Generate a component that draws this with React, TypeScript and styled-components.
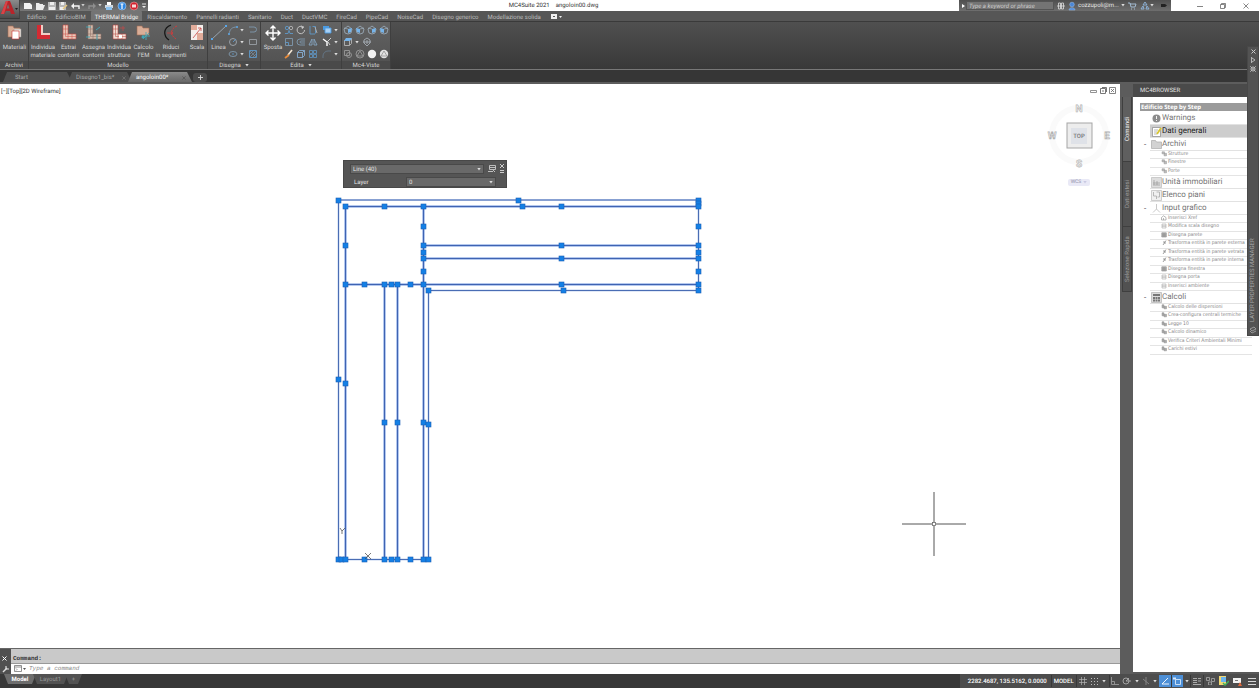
import React from 'react';
import styled, { createGlobalStyle } from 'styled-components';

const Global = createGlobalStyle`
  * { box-sizing: border-box; }
  html, body { margin: 0; padding: 0; }
  body {
    font-family: Roboto, "Liberation Sans", sans-serif;
    font-size: 6px;
    line-height: 8px;
    text-rendering: geometricPrecision;
    background: #fff;
    overflow: hidden;
  }
  button, input, select {
    font: inherit;
    color: inherit;
    margin: 0;
    padding: 0;
    border: 0;
    background: none;
    text-rendering: inherit;
  }
  ul { list-style: none; margin: 0; padding: 0; }
  svg { display: block; flex: none; }
`;

/* ---------- shell ---------- */

const Shell = styled.div`
  position: relative;
  display: flex;
  flex-direction: column;
  min-height: 100vh;
  background: #595959;
`;

const TitleBar = styled.header`
  display: flex;
  height: 11px;
  padding-left: 18px;
  background: #fff;
`;

const AppButton = styled.button`
  position: absolute;
  left: 0;
  top: 0;
  z-index: 2;
  width: 20px;
  height: 19px;
  background: linear-gradient(#8b8b8b, #4c4c4c);
  border-right: 1px solid #444;
  border-bottom: 1px solid #3a3a3a;
`;

const QuickAccess = styled.div`
  display: flex;
  align-items: center;
  width: 130px;
  padding-left: 4px;
  background: linear-gradient(#4f4f4f, #777);
`;

const QuickButton = styled.button<{ $w?: number }>`
  display: flex;
  align-items: center;
  justify-content: center;
  width: ${p => p.$w ?? 12}px;
  height: 11px;
`;

const WindowTitle = styled.h1`
  flex: 1;
  display: flex;
  justify-content: center;
  gap: 6px;
  margin: 0;
  font-size: 6px;
  font-weight: 400;
  line-height: 12px;
  color: #333;
`;

const InfoBar = styled.div`
  display: flex;
  align-items: center;
  width: 212px;
  color: #e4e4e4;
  background: linear-gradient(#4f4f4f, #6e6e6e);
`;

const SearchInput = styled.input`
  width: 88px;
  height: 9px;
  padding: 1px 2px 0;
  font-style: italic;
  color: #ddd;
  background: #747474;
  border: 1px solid #555;
  &::placeholder { color: #ccc; opacity: 1; }
`;

const AccountButton = styled.button`
  display: flex;
  align-items: center;
  gap: 2px;
  width: 58px;
  line-height: 12px;
`;

const WindowControls = styled.div`
  display: flex;
  width: 88px;
  padding-left: 18px;
`;

/* ---------- ribbon ---------- */

const TabRow = styled.nav`
  display: flex;
  gap: 1px;
  height: 11px;
  padding-left: 23px;
  background: #565656;
  border-bottom: 1px solid #3a3a3a;
`;

const RibbonTab = styled.button<{ $active?: boolean }>`
  height: 10px;
  padding: 1px 4px 0;
  line-height: 11px;
  color: ${p => (p.$active ? '#f4f4f4' : '#bebebe')};
  background: ${p => (p.$active ? '#747474' : 'transparent')};
  border-radius: 1px 1px 0 0;
`;

const RibbonMenu = styled.button`
  display: flex;
  align-items: center;
  margin-left: 5px;
`;

const Ribbon = styled.div`
  display: flex;
  height: 48px;
  background: linear-gradient(#505050, #383838);
  border-bottom: 1px solid #777;
`;

const Panel = styled.section<{ $w: number }>`
  display: flex;
  flex-direction: column;
  width: ${p => p.$w}px;
  background: linear-gradient(#636363, #505050);
  border-right: 1px solid #3f3f3f;
  color: #d6d6d6;
`;

const PanelBody = styled.div`
  flex: 1;
  display: flex;
  padding: 2px 0 0 1px;
`;

const PanelTitle = styled.h2`
  display: flex;
  align-items: center;
  justify-content: center;
  gap: 4px;
  height: 8px;
  margin: 0;
  padding-top: 1px;
  font-size: 6px;
  font-weight: 400;
  line-height: 8px;
  background: #4a4a4a;
`;

const ToolButton = styled.button<{ $w: number }>`
  display: flex;
  flex-direction: column;
  align-items: center;
  gap: 3px;
  width: ${p => p.$w}px;
  line-height: 8px;
  white-space: nowrap;
`;

const ToolLabel = styled.span`
  display: flex;
  flex-direction: column;
  align-items: center;
`;

const SmallGrid = styled.div`
  display: flex;
  flex-direction: column;
  flex: 1;
`;

const SmallRow = styled.div`
  display: flex;
  height: 12px;
`;

const SmallTool = styled.button<{ $w?: number }>`
  display: flex;
  align-items: center;
  gap: 2px;
  width: ${p => p.$w ?? 12}px;
  height: 12px;
`;

/* ---------- document tabs ---------- */

const DocTabs = styled.nav`
  display: flex;
  align-items: flex-end;
  height: 14px;
  padding-left: 3px;
  background: #363636;
  border-bottom: 2px solid #5d5d5d;
`;

const DocTab = styled.button<{ $w: number; $active?: boolean; $inset?: number }>`
  display: flex;
  align-items: center;
  justify-content: space-between;
  width: ${p => p.$w}px;
  height: 10px;
  margin-right: -4px;
  padding: 1px 6px 0 ${p => p.$inset ?? 8}px;
  line-height: 10px;
  color: ${p => (p.$active ? '#fff' : '#a8a8a8')};
  background: ${p => (p.$active ? 'linear-gradient(#8a8a8a, #686868)' : '#505050')};
  clip-path: polygon(4px 0, calc(100% - 5px) 0, 100% 100%, 0 100%);
`;

const NewTab = styled.button`
  display: flex;
  align-items: center;
  justify-content: center;
  width: 14px;
  height: 9px;
  margin-left: 5px;
  background: #4c4c4c;
  border-radius: 3px;
`;

/* ---------- work area ---------- */

const Main = styled.main`
  flex: 1;
  display: flex;
`;

const WorkColumn = styled.div`
  flex: 1;
  display: flex;
  flex-direction: column;
  min-width: 0;
`;

const Viewport = styled.section`
  position: relative;
  flex: 1;
  background: #fff;
  overflow: hidden;
`;

const ViewLabel = styled.div`
  position: absolute;
  left: 1px;
  top: 3px;
  line-height: 9px;
  color: #333;
`;

const Canvas = styled.svg`
  position: absolute;
  inset: 0;
  width: 100%;
  height: 100%;
`;

const ViewButtons = styled.div`
  position: absolute;
  right: 3px;
  top: 1px;
  display: flex;
`;

const ViewCube = styled.div`
  position: absolute;
  right: 7px;
  top: 17px;
`;

const WcsHolder = styled.div`
  position: absolute;
  right: 30px;
  top: 95px;
`;

const WcsButton = styled.button`
  display: flex;
  align-items: center;
  justify-content: center;
  gap: 2px;
  width: 22px;
  height: 7px;
  font-size: 5px;
  line-height: 7px;
  color: #8d8da6;
  background: #e9e9f6;
  border-radius: 2px;
`;

const QuickProps = styled.form`
  position: absolute;
  left: 343px;
  top: 76px;
  display: flex;
  width: 164px;
  height: 28px;
  padding: 3px 2px 2px;
  gap: 4px;
  color: #e6e6e6;
  background: #555;
  border: 1px solid #484848;
`;

const Handle = styled.span`
  width: 4px;
  margin: 0 0 8px 0;
  background: repeating-linear-gradient(#2e2e2e 0 1px, #6a6a6a 1px 2px);
`;

const PropRows = styled.div`
  display: flex;
  flex-direction: column;
  gap: 3px;
  width: 146px;
`;

const PropRow = styled.label`
  display: flex;
  align-items: center;
  height: 10px;
`;

const PropName = styled.span`
  width: 56px;
  padding: 1px 0 0 4px;
`;

const SelectBox = styled.span<{ $w: number }>`
  position: relative;
  display: flex;
  align-items: center;
  justify-content: flex-end;
  width: ${p => p.$w}px;
  height: 10px;
  padding-right: 2px;
  background: #696969;
  border: 1px solid #494949;
`;

const Select = styled.select`
  position: absolute;
  inset: 0;
  width: 100%;
  padding: 1px 0 0 2px;
  line-height: 7px;
  appearance: none;
  color: #e6e6e6;
`;

const PropIcons = styled.div`
  display: flex;
  flex: 1;
  justify-content: flex-end;
`;

const CommandArea = styled.section`
  display: flex;
  height: 26px;
  background: #c9c9c9;
  border-top: 1px solid #666;
  font-family: "Liberation Mono", monospace;
`;

const CommandGrip = styled.div`
  display: flex;
  flex-direction: column;
  justify-content: flex-end;
  gap: 4px;
  width: 11px;
  padding: 0 0 1px 2px;
  background: #505050;
`;

const CommandLines = styled.div`
  flex: 1;
  display: flex;
  flex-direction: column;
`;

const History = styled.output`
  height: 15px;
  padding: 6px 2px 0;
  font-weight: 700;
  line-height: 8px;
  color: #333;
  border-bottom: 1px solid #999;
`;

const Prompt = styled.label`
  display: flex;
  align-items: center;
  gap: 3px;
  flex: 1;
  padding: 0 0 1px 3px;
  background: #fff;
`;

const CommandInput = styled.input`
  flex: 1;
  height: 9px;
  font-style: italic;
  &::placeholder { color: #888; opacity: 1; }
`;

/* ---------- side browser ---------- */

const SideTabs = styled.nav`
  display: flex;
  flex-direction: column;
  width: 13px;
  padding: 13px 1px 0 2px;
  background: #5c5c5c;
`;

const SideTab = styled.button<{ $active?: boolean }>`
  display: flex;
  align-items: center;
  justify-content: center;
  height: 65px;
  writing-mode: vertical-rl;
  transform: rotate(180deg);
  color: ${p => (p.$active ? '#f2f2f2' : '#9d9d9d')};
  background: ${p => (p.$active ? '#5f5f5f' : '#515151')};
  border: 1px solid #3f3f3f;
  border-bottom-width: 0;
  line-height: 9px;
`;

const Browser = styled.aside`
  width: 126px;
  margin-bottom: 2px;
  background: #fff;
`;

const BrowserTitle = styled.h2`
  height: 13px;
  margin: 0;
  padding-left: 7px;
  font-size: 6px;
  font-weight: 400;
  line-height: 14px;
  color: #e0e0e0;
  background: #4a4a4a;
`;

const Tree = styled.div`
  display: flex;
  flex-direction: column;
  padding: 6px 7px 0 7px;
`;

const TreeHeader = styled.h3`
  height: 8px;
  margin: 0 0 1px;
  padding-left: 1px;
  font-family: "Noto Sans", sans-serif;
  font-size: 6px;
  font-weight: 700;
  line-height: 8px;
  color: #fff;
  background: #9b9b9b;
`;

const Row = styled.div<{ $selected?: boolean }>`
  display: flex;
  align-items: center;
  height: 13px;
  font-size: 8px;
  line-height: 12px;
  color: ${p => (p.$selected ? '#222' : '#757575')};
`;

const Toggle = styled.button`
  width: 10px;
  height: 12px;
  color: #555;
  font-size: 8px;
  line-height: 10px;
`;

const RowButton = styled.button<{ $selected?: boolean }>`
  flex: 1;
  display: flex;
  align-items: center;
  height: 13px;
  padding-left: 1px;
  background: ${p => (p.$selected ? '#cdcdcd' : 'transparent')};
  border-bottom: 1px solid #e2e2e2;
  white-space: nowrap;
`;

const SubList = styled.ul`
  padding-left: 10px;
`;

const SubItem = styled.li`
  display: flex;
  align-items: flex-start;
  height: 8px;
  border-bottom: 1px solid #e4e4e4;
  &:nth-child(even) { height: 9px; }
`;

const SubButton = styled.button`
  display: flex;
  align-items: flex-start;
  gap: 1px;
  height: 7px;
  padding-left: 11px;
  font-family: "DejaVu Sans Condensed", "Liberation Sans", sans-serif;
  font-size: 5px;
  line-height: 7px;
  color: #858585;
  white-space: nowrap;
`;

const LayerManager = styled.aside`
  position: absolute;
  right: 0;
  top: 46px;
  z-index: 3;
  display: flex;
  flex-direction: column;
  align-items: center;
  gap: 3px;
  width: 12px;
  height: 290px;
  padding: 2px 0 1px;
  color: #a8a8a8;
  background: #535353;
  border: 1px solid #484848;
`;

const LayerTitle = styled.span`
  flex: 1;
  padding-top: 1px;
  writing-mode: vertical-rl;
  transform: rotate(180deg);
  line-height: 10px;
  white-space: nowrap;
`;

/* ---------- status bar ---------- */

const StatusBar = styled.footer`
  display: flex;
  justify-content: space-between;
  height: 14px;
  background: #383838;
`;

const LayoutTabs = styled.nav`
  display: flex;
  height: 10px;
  padding-left: 4px;
`;

const LayoutTab = styled.button<{ $active?: boolean; $w: number }>`
  width: ${p => p.$w}px;
  height: 10px;
  margin-right: -3px;
  padding-top: 1px;
  line-height: 10px;
  font-weight: ${p => (p.$active ? 700 : 400)};
  color: ${p => (p.$active ? '#fff' : '#999')};
  background: ${p => (p.$active ? '#6d6d6d' : '#525252')};
  clip-path: polygon(0 0, 100% 0, calc(100% - 4px) 100%, 4px 100%);
`;

const StatusTools = styled.div`
  display: flex;
  align-items: center;
  width: 299px;
  color: #fff;
  background: #4d4d4d;
`;

const Coordinates = styled.output`
  width: 91px;
  padding: 2px 4px 0 0;
  text-align: right;
  line-height: 12px;
  font-weight: 500;
  white-space: nowrap;
`;

const StatusButton = styled.button<{ $w?: number; $on?: boolean; $line?: boolean; $text?: boolean }>`
  display: flex;
  align-items: center;
  justify-content: center;
  width: ${p => p.$w ?? 13}px;
  height: 12px;
  padding-top: ${p => (p.$text ? 2 : 0)}px;
  font-weight: 500;
  background: ${p => (p.$on ? '#4d8fd6' : 'transparent')};
  border-left: ${p => (p.$line ? '1px solid #383838' : '0')};
`;

/* ---------- drawings ---------- */

type IconProps = { w?: number; h?: number; children: React.ReactNode; stroke?: string };

const Icon = ({ w = 10, h = 10, stroke = '#b4b4b4', children }: IconProps) => (
  <svg width={w} height={h} viewBox={`0 0 ${w} ${h}`} fill="none" stroke={stroke} strokeWidth={0.9} aria-hidden="true">
    {children}
  </svg>
);

const Caret = ({ color = '#ddd' }: { color?: string }) => (
  <svg width="4" height="3" viewBox="0 0 4 3" aria-hidden="true"><path d="M.3 0h3.400L2 2.600z" fill={color} /></svg>
);

const Cross = ({ color = '#ddd', size = 5 }: { color?: string; size?: number }) => (
  <svg width={size} height={size} viewBox="0 0 5 5" stroke={color} fill="none" aria-hidden="true"><path d="M.5.5l4 4M4.5.5l-4 4" /></svg>
);

const LShape = ({ fill, lines }: { fill: string; lines: string }) => (
  <>
    <path d="M3 1h5v9h8v5H3z" fill={fill} stroke={lines} strokeWidth=".6" />
    <path d="M5.500 1v11.500H16M3 5h5M12 10v5M3 10h5v5" stroke={lines} strokeWidth=".5" />
  </>
);

const bigIcons: Record<string, React.ReactNode> = {
  materials: <>
    <path d="M2 2h5l1 2h6v9H2z" fill="#d9ae98" stroke="#a26b55" strokeWidth=".6" />
    <path d="M8 5h7v8H8z" fill="#e9ded8" stroke="#999" strokeWidth=".5" />
    <path d="M6 7h7v8H6z" fill="#fff" stroke="#c33" strokeWidth=".6" />
  </>,
  single: <><path d="M3 1h4v14H3z" fill="#d32b33" stroke="none" /><path d="M7 1h2v9H7z" fill="#f0cfc6" stroke="none" /><path d="M3 11h13v4H3z" fill="#d32b33" stroke="none" /><path d="M7 9h9v2H7z" fill="#f0cfc6" stroke="none" /></>,
  extract: <LShape fill="#e7c9ba" lines="#cc4a44" />,
  assign: <><LShape fill="#d2b9aa" lines="#8a6b62" /><path d="M1 3h5M12 10v6M1 13h4M15 3l-4 3" stroke="#3fa5b5" /></>,
  structures: <><LShape fill="#f0dfd4" lines="#b8433f" /><path d="M10 4h5M13 2v5" stroke="#c84848" strokeWidth=".7" /><path d="M9 11h3v3H9z" fill="#fff" stroke="none" /></>,
  fem: <><path d="M2 2h5l1 2h6v7H2z" fill="#d9ae98" stroke="#a26b55" strokeWidth=".6" /><path d="M11 8v8M7 12h8M8 15l6-6" stroke="#49a8b4" strokeWidth=".9" /><circle cx="8" cy="13" r="1.500" fill="#3fa5b5" stroke="none" /></>,
  segments: <><path d="M9 1C1 4 1 12 7 16" stroke="#161616" strokeWidth="1.300" /><path d="M15 2C8 5 8 11 14 15" stroke="#d63a3a" strokeDasharray="2 1" /><path d="M5 9h6M9 7l2 2-2 2" stroke="#d63a3a" strokeWidth=".7" /></>,
  scale: <><path d="M3 1h12v15H3z" fill="#f4efec" stroke="none" /><path d="M3 1h6v5H3zM9 9h6v7H9z" fill="#e2ac9a" stroke="none" /><path d="M5 14l8-10M13 4v3M13 4h-3" stroke="#c84848" strokeWidth=".8" /></>,
  line: <><path d="M2 15L16 2" stroke="#a4b4c2" strokeWidth=".8" /><path d="M1 14h2v2H1zM15 1h2v2h-2z" fill="#58a5e8" stroke="none" /></>,
  move: <path d="M9 2v14M2 9h14M6.500 4.500L9 2l2.500 2.500M6.500 13.500L9 16l2.500-2.500M4.500 6.500L2 9l2.500 2.500M13.500 6.500L16 9l-2.500 2.500" stroke="#fff" strokeWidth="1.400" />,
};

const Big = ({ name }: { name: string }) => <Icon w={18} h={17}>{bigIcons[name]}</Icon>;

const B = '#5f98c8';
const D = '#7f98ae';
const smallIcons: Record<string, React.ReactNode> = {
  arc: <><path d="M1 9C2 4 4 2 9 2" stroke={D} /><path d="M0 8h2v2H0zM8 1h2v2H8z" fill={B} stroke="none" /></>,
  circle: <><circle cx="5" cy="5" r="3.500" stroke="#a0a8b0" /><path d="M5 5l3-3" stroke={B} /></>,
  ellipse: <><ellipse cx="5" cy="5" rx="4" ry="2.500" stroke={D} /><path d="M4 5h2" stroke={B} /></>,
  poly: <path d="M1 2h5a2.500 2.500 0 010 5H2" stroke={D} />,
  rect: <path d="M1.500 2.500h7v5h-7z" stroke="#9a9fa5" />,
  hatch: <><path d="M1.500 1.500h7v7h-7z" stroke={B} /><path d="M2 8l6-6M2 5l3-3M5 8l3-3M2 2l6 6" stroke={D} strokeWidth=".6" /></>,
  copy: <><circle cx="3" cy="3" r="1.700" stroke={B} /><circle cx="7" cy="3" r="1.700" /><path d="M1 8.500h3l1-3 1 3h3" stroke={B} /></>,
  rotate: <><path d="M7 2A3.700 3.700 0 108.500 5" stroke="#ccc" /><path d="M5 1l3 1-2 2" fill="#ccc" /></>,
  stretch: <><path d="M2 1v8h5M4.500 1.500h3v7" stroke={B} /><path d="M7 2l2 6" /></>,
  scaleS: <><path d="M1.500 1.500h7v7h-7z" stroke={D} /><path d="M1.500 5.500h3v3" stroke={B} /></>,
  offset: <path d="M9 2H4a3 3 0 000 6h5M9 4H5a1 1 0 000 2h4" stroke={D} />,
  mirror: <path d="M4 2L1 8h3zM6 2l3 6H6z" stroke="#86a6c2" />,
  brush: <><path d="M4 6l4-5" stroke="#f3e6d4" strokeWidth="1.600" /><path d="M1 9l4-3" stroke="#e88b3a" strokeWidth="1.800" /></>,
  box: <path d="M1.500 3.500h5v5h-5zM1.500 3.500l2-2h5v5l-2 2M6.500 3.500l2-2" stroke="#86acd0" />,
  array: <path d="M1.500 1.500h3v3h-3zM5.500 1.500h3v3h-3zM1.500 5.500h3v3h-3zM5.500 5.500h3v3h-3z" stroke={B} strokeWidth=".8" />,
  trim: <><path d="M1 2l4 3v4" stroke="#fff" strokeWidth="1.400" /><path d="M9 1L5 5M6 5l2 3" stroke="#ddd" /></>,
  align: <><path d="M1 1h6v4H1z" fill="#4c9be0" stroke="none" /><path d="M3 3h6v5H3z" fill="#a8d0f4" stroke="#4c9be0" /></>,
  fillet: <path d="M1 9V7a5 5 0 015-5h3" stroke="#64788a" />,
  cubeL: <><path d="M5 1l4 3-1 4-3 1-3-1-1-4z" stroke="#a8bccd" strokeWidth=".7" /><path d="M1 3l4 1v4L2 7z" fill="#76b4ea" stroke="none" /><path d="M5 4l4-1" stroke="#a8bccd" strokeWidth=".6" /></>,
  cubeR: <><path d="M5 1l4 3-1 4-3 1-3-1-1-4z" stroke="#a8bccd" strokeWidth=".7" /><path d="M5 4l4-1-1 4-3 1z" fill="#76b4ea" stroke="none" /><path d="M5 4L1 3" stroke="#a8bccd" strokeWidth=".6" /></>,
  top: <><path d="M1.500 3.500h5v5h-5zM6.500 8.500l2-2v-5" /><path d="M1 4l2-3h6L7 4z" fill="#76b4ea" stroke="none" /></>,
  orbit: <path d="M5 1l3 2v3L5 9 2 6V3zM1 5h8M5 3v4" stroke="#aeb8c0" strokeWidth=".8" />,
  wire: <><path d="M1.500 1.500h5v5h-5z" stroke="#999" /><circle cx="6" cy="6" r="2.500" stroke="#999" /></>,
  hidden: <><circle cx="5" cy="5" r="4" stroke="#999" /><path d="M5 2l3 5H2z" stroke="#999" /></>,
  sphere: <circle cx="5" cy="5" r="4.200" fill="#f2f2f2" stroke="none" />,
  shaded: <><circle cx="5" cy="5" r="4.200" fill="#e3e3e3" stroke="none" /><path d="M5 2l3 5H2z" stroke="#888" strokeWidth=".7" /></>,
};

const Small = ({ name, caret, w }: { name: string; caret?: boolean; w?: number }) => (
  <SmallTool $w={w} aria-label={name}>
    <Icon>{smallIcons[name]}</Icon>
    {caret && <Caret />}
  </SmallTool>
);

const Tool = ({ icon, label, w }: { icon: string; label: string[]; w: number }) => (
  <ToolButton $w={w}>
    <Big name={icon} />
    <ToolLabel>{label.map(l => <span key={l}>{l}</span>)}</ToolLabel>
  </ToolButton>
);

/* ---------- model geometry, in window units ---------- */

const VIEW_TOP = 84;
const OUTLINE = 'M338.500 200H698.500V290.500H428.500V559.500H338.500Z';
const WALLS = 'M698.500 206.500H345.500V559M345.500 284.500H698.500M423.500 206V559M423.500 245.500H698.500M423.500 258.500H698.500M384.500 285V559M397.500 285V559';

const GRIPS: [number, number][] = [
  [338, 200], [518, 200], [698, 200], [698, 203], [345, 206], [384, 206], [423, 206], [522, 206], [561, 206], [698, 206],
  [423, 226], [698, 226], [345, 245], [423, 245], [561, 245], [698, 245], [423, 252], [698, 252],
  [423, 258], [561, 258], [698, 258], [423, 271], [698, 271],
  [345, 284], [364, 284], [384, 284], [391, 284], [397, 284], [410, 284], [423, 284], [561, 284], [698, 284],
  [428, 290], [563, 290], [698, 290], [338, 379], [345, 383], [384, 422], [397, 422], [423, 422], [428, 424],
  [338, 559], [341, 559], [345, 559], [364, 559], [384, 559], [391, 559], [397, 559], [410, 559], [423, 559], [428, 559],
];

const Drawing = () => (
  <Canvas aria-label="Model">
    <g transform={`translate(0 ${-VIEW_TOP})`} fill="none">
      <path d={OUTLINE} stroke="#c3d3ef" strokeWidth="2" />
      <path d={WALLS} stroke="#b4c8ee" strokeWidth="3" />
      <path d={OUTLINE} stroke="#4a6db4" strokeWidth="1" />
      <path d={WALLS} stroke="#3f63b2" strokeWidth="1" />
      {GRIPS.map(([x, y]) => (
        <rect key={`${x}-${y}`} x={x - 2} y={y - 2} width="5" height="5" fill="#1480e6" stroke="#1b5fb4" strokeWidth=".6" />
      ))}
      <path d="M340 528l2 3 3-3M342 531v3M365 553l6 6M371 553l-6 6" stroke="#555" strokeWidth=".8" />
      <path d="M902 524h30M936 524h30M934 492v30M934 526v30" stroke="#555" strokeWidth="1" />
      <rect x="932.500" y="522.500" width="3" height="3" stroke="#666" strokeWidth=".8" />
    </g>
  </Canvas>
);

const Compass = () => (
  <svg width="68" height="70" viewBox="0 0 68 70" aria-label="View cube">
    <circle cx="34" cy="34" r="27" fill="none" stroke="#fafafa" strokeWidth="6" />
    <g fontFamily="Roboto, sans-serif" fontSize="10" fontWeight="700" fill="#f6f6f6" stroke="#b0b0b0" strokeWidth=".6" textAnchor="middle">
      <text x="34" y="11">N</text>
      <text x="34" y="66">S</text>
      <text x="7" y="38">W</text>
      <text x="62" y="38">E</text>
    </g>
    <rect x="22" y="22" width="25" height="25" fill="#ededed" stroke="#a5a5a5" />
    <rect x="26" y="27" width="16" height="16" fill="#dfe2e8" />
    <text x="34" y="37" fontFamily="Roboto, sans-serif" fontSize="6" fontWeight="500" fill="#777" textAnchor="middle">TOP</text>
  </svg>
);

/* ---------- tree data ---------- */

type Node = { label: string; icon: string; selected?: boolean; items?: [string, string][] };

const tree: Node[] = [
  { label: 'Warnings', icon: 'warn' },
  { label: 'Dati generali', icon: 'note', selected: true },
  { label: 'Archivi', icon: 'folder', items: [['Strutture', 'stack'], ['Finestre', 'stack'], ['Porte', 'stack']] },
  { label: 'Unità immobiliari', icon: 'units' },
  { label: 'Elenco piani', icon: 'floors' },
  {
    label: 'Input grafico', icon: 'axes', items: [
      ['Inserisci Xref', 'house'], ['Modifica scala disegno', 'page'], ['Disegna parete', 'wall'],
      ['Trasforma entità in parete esterna', 'pen'], ['Trasforma entità in parete vetrata', 'pen'],
      ['Trasforma entità in parete interna', 'pen'], ['Disegna finestra', 'wall'], ['Disegna porta', 'page'],
      ['Inserisci ambiente', 'page'],
    ],
  },
  {
    label: 'Calcoli', icon: 'calc', items: [
      ['Calcolo delle dispersioni', 'calcS'], ['Crea-configura centrali termiche', 'calcS'], ['Legge 10', 'calcS'],
      ['Calcolo dinamico', 'calcS'], ['Verifica Criteri Ambientali Minimi', 'calcS'], ['Carichi estivi', 'calcS'],
    ],
  },
];

const treeIcons: Record<string, React.ReactNode> = {
  warn: <><circle cx="5.500" cy="5.500" r="4" fill="#8c8c8c" stroke="none" /><path d="M5.500 3v3M5.500 7v1" stroke="#fff" /></>,
  note: <><path d="M1.500 1.500h8v9h-8z" fill="#fff" stroke="#888" strokeWidth=".7" /><path d="M3 4h4M3 6h3M3 8h3" stroke="#999" strokeWidth=".7" /><path d="M6 8l4-6" stroke="#d8c62f" strokeWidth="1.800" /></>,
  folder: <path d="M.5 9.500v-8h4l1 1.500h5v6.500z" fill="#d2d2d2" stroke="#aaa" strokeWidth=".7" />,
  units: <><path d="M.5.500h10v10H.5z" fill="#dedede" stroke="#bbb" strokeWidth=".7" /><path d="M2 8h7M2 6h7M3 3v5M6 4v4" stroke="#999" strokeWidth=".7" /></>,
  floors: <><path d="M.5.500h10v10H.5z" fill="#f0f0f0" stroke="#bbb" strokeWidth=".7" /><path d="M2.500 2v4h3v3M5.500 2h3v5h-2" stroke="#aaa" strokeWidth=".8" /></>,
  axes: <path d="M5.500 1v5L2 9.500M5.500 6L9 9.500" stroke="#bbb" strokeWidth=".8" />,
  calc: <><path d="M.5.500h10v10H.5z" fill="#ddd" stroke="#aaa" strokeWidth=".6" /><path d="M2 2h7v2H2zM2 5h2v2H2zM4.500 5h2v2h-2zM7 5h2v2H7zM2 7.500h2v2H2zM4.500 7.500h2v2h-2zM7 7.500h2v2H7z" fill="#777" stroke="none" /></>,
};

const tinyIcons: Record<string, React.ReactNode> = {
  stack: <path d="M1 .800h2.500v2H1zM3 2.300h2.500v2.500H3z" fill="#bbb" stroke="#999" strokeWidth=".5" />,
  house: <path d="M.5 2.500L2.500.800l2.500 1.700v2.500H.5zM2.500 3v2" stroke="#999" strokeWidth=".7" />,
  page: <path d="M1 1h4v4H1zM1 2.300h4M1 3.600h4" stroke="#aaa" strokeWidth=".6" />,
  wall: <path d="M.8.800h4.500v4.200H.8zM1 3h4M3 1v4" fill="#b0b0b0" stroke="#8a8a8a" strokeWidth=".6" />,
  pen: <path d="M2 5l3-4.500M2 2h2v2" stroke="#888" strokeWidth=".8" />,
  calcS: <path d="M1 .800h2v3H1zM3 2.300h2.500v2.500H3z" fill="#aaa" stroke="#909090" strokeWidth=".5" />,
};

const tabs = ['Edificio', 'EdificioBIM', 'THERMal Bridge', 'Riscaldamento', 'Pannelli radianti', 'Sanitario', 'Duct', 'DuctVMC', 'FireCad', 'PipeCad', 'NoiseCad', 'Disegno generico', 'Modellazione solida'];

/* ---------- page sections ---------- */

const Title = () => (
  <TitleBar>
    <AppButton aria-label="Application menu">
      <Icon w={19} h={18} stroke="none">
        <path d="M1 14L6 1h4l5 13h-4l-1-3H6l-2 3z" fill="#b8242a" />
        <path d="M6.500 8.500L8 4l1.500 4.500z" fill="#7b6a6a" />
        <path d="M1 14L6 1h2L4 14z" fill="#d94347" />
        <path d="M15 8h3l-1.500 2z" fill="#222" />
      </Icon>
    </AppButton>
    <QuickAccess>
      <QuickButton aria-label="New"><Icon><path d="M1 2h6l2 2v4H1z" fill="#f2f2f2" stroke="none" /></Icon></QuickButton>
      <QuickButton aria-label="Open"><Icon><path d="M1 2h3l1 1h3v1h2L8 9H1z" fill="#ececec" stroke="none" /></Icon></QuickButton>
      <QuickButton aria-label="Save" $w={11}><Icon><path d="M1 1h8v8H1z" fill="#b8b8b8" stroke="none" /><path d="M3 1h4v3H3zM2 6h6v3H2z" fill="#eee" stroke="none" /></Icon></QuickButton>
      <QuickButton aria-label="Save as" $w={12}><Icon><path d="M1 1h7v8H1z" fill="#b8b8b8" stroke="none" /><path d="M3 1h3v3H3zM2 6h4v3H2z" fill="#eee" stroke="none" /><path d="M5 8l4-4" stroke="#e6c67c" strokeWidth="1.500" /></Icon></QuickButton>
      <QuickButton aria-label="Undo" $w={11}><Icon><path d="M9 8V5H3" stroke="#f4f4f4" strokeWidth="1.400" /><path d="M4 2L1 5l3 3z" fill="#f4f4f4" stroke="none" /></Icon></QuickButton>
      <QuickButton aria-label="Undo list" $w={5}><Caret color="#ccc" /></QuickButton>
      <QuickButton aria-label="Redo" $w={13}><Icon><path d="M2 8V5h5" stroke="#8e8e8e" strokeWidth="1.400" /><path d="M6 2l3 3-3 3z" fill="#8e8e8e" stroke="none" /></Icon></QuickButton>
      <QuickButton aria-label="Redo list" $w={4}><Caret color="#ccc" /></QuickButton>
      <QuickButton aria-label="Plot" $w={14}><Icon><path d="M3 1h4v3H3z" fill="#fff" stroke="none" /><path d="M1 4h8v3H1z" fill="#cfd9e2" stroke="none" /><path d="M2 6h6v3H2z" fill="#8cc1ee" stroke="none" /></Icon></QuickButton>
      <QuickButton aria-label="Info"><Icon><circle cx="5" cy="5" r="4" fill="#2b84e0" stroke="#cfe2f6" strokeWidth=".5" /><path d="M3.500 3h3M5 3v5" stroke="#fff" strokeWidth="1.200" /></Icon></QuickButton>
      <QuickButton aria-label="Stop"><Icon><circle cx="5" cy="5" r="4" fill="#d3222e" stroke="#e8b8b8" strokeWidth=".5" /><path d="M3 3.500h4v3H3z" fill="#f6dada" stroke="none" /></Icon></QuickButton>
      <QuickButton aria-label="Customize" $w={8}><Icon w={6} h={6}><path d="M1 1h4" stroke="#eee" /><path d="M1 3h4L3 5z" fill="#eee" stroke="none" /></Icon></QuickButton>
    </QuickAccess>
    <WindowTitle><span>MC4Suite 2021</span><span>angoloin00.dwg</span></WindowTitle>
    <InfoBar>
      <QuickButton aria-label="Collapse search" $w={7}><Icon w={4} h={4} stroke="none"><path d="M1 0l3 2-3 2z" fill="#fff" /></Icon></QuickButton>
      <SearchInput aria-label="Search" placeholder="Type a keyword or phrase" />
      <QuickButton aria-label="Find" $w={14}><Icon stroke="#ddd"><path d="M2.500 2v6h2V2zM5.500 2v6h2V2zM1 5h8" strokeWidth=".8" /></Icon></QuickButton>
      <AccountButton>
        <Icon w={8}><circle cx="4" cy="3.500" r="2.300" fill="#4b87d6" stroke="#9fc2ee" strokeWidth=".5" /><path d="M1 9c0-3 6-3 6 0z" fill="#4b87d6" stroke="#9fc2ee" strokeWidth=".5" /></Icon>
        cozzupoli@m...
        <Caret />
      </AccountButton>
      <QuickButton aria-label="Store"><Icon stroke="#a9c4dc"><path d="M1 2h2l1 4h4l1-3H3" /><path d="M4 8h1M7 8h1" /></Icon></QuickButton>
      <QuickButton aria-label="Apps" $w={18}><Icon stroke="#8fb6dc"><path d="M5 1l2 3H3zM3 5l1 3H1zM7 5l2 3H6z" /></Icon><Caret /></QuickButton>
      <QuickButton aria-label="Help" $w={15}><Icon w={6} h={5} stroke="none"><path d="M0 1h4v3H0zM4 1l2 1.500L4 4z" fill="#222" /></Icon></QuickButton>
    </InfoBar>
    <WindowControls>
      <QuickButton aria-label="Minimize" $w={23}><Icon w={6} h={6} stroke="#666"><path d="M0 3.500h6" strokeWidth=".8" /></Icon></QuickButton>
      <QuickButton aria-label="Restore" $w={22}><Icon w={6} h={6} stroke="#555"><path d="M.5 1.500h4v4h-4zM1.500 1.500v-1h4v4h-1" strokeWidth=".7" /></Icon></QuickButton>
      <QuickButton aria-label="Close" $w={26}><Icon w={6} h={6} stroke="#555"><path d="M.5.500l5 5M5.500.500l-5 5" strokeWidth=".7" /></Icon></QuickButton>
    </WindowControls>
  </TitleBar>
);

const RibbonArea = () => (
  <>
    <TabRow>
      {tabs.map(t => <RibbonTab key={t} $active={t === 'THERMal Bridge'}>{t}</RibbonTab>)}
      <RibbonMenu aria-label="Ribbon display">
        <Icon w={12} h={5} stroke="none"><path d="M0 0h6v5H0z" fill="#eee" /><path d="M2 2h2v1H2z" fill="#555" /><path d="M8 2h3L9.500 4z" fill="#eee" /></Icon>
      </RibbonMenu>
    </TabRow>
    <Ribbon>
      <Panel $w={29}>
        <PanelBody><Tool icon="materials" label={['Materiali']} w={27} /></PanelBody>
        <PanelTitle>Archivi</PanelTitle>
      </Panel>
      <Panel $w={179}>
        <PanelBody>
          <Tool icon="single" label={['Individua', 'materiale']} w={26} />
          <Tool icon="extract" label={['Estrai', 'contorni']} w={25} />
          <Tool icon="assign" label={['Assegna', 'contorni']} w={25} />
          <Tool icon="structures" label={['Individua', 'strutture']} w={26} />
          <Tool icon="fem" label={['Calcolo', 'FEM']} w={23} />
          <Tool icon="segments" label={['Riduci', 'in segmenti']} w={32} />
          <Tool icon="scale" label={['Scala']} w={20} />
        </PanelBody>
        <PanelTitle>Modello</PanelTitle>
      </Panel>
      <Panel $w={53}>
        <PanelBody>
          <Tool icon="line" label={['Linea']} w={19} />
          <SmallGrid>
            <SmallRow><Small name="arc" caret w={20} /><Small name="poly" /></SmallRow>
            <SmallRow><Small name="circle" caret w={20} /><Small name="rect" /></SmallRow>
            <SmallRow><Small name="ellipse" caret w={20} /><Small name="hatch" /></SmallRow>
          </SmallGrid>
        </PanelBody>
        <PanelTitle>Disegna <Caret /></PanelTitle>
      </Panel>
      <Panel $w={81}>
        <PanelBody>
          <Tool icon="move" label={['Sposta']} w={22} />
          <SmallGrid>
            <SmallRow><Small name="copy" /><Small name="rotate" /><Small name="stretch" w={14} /><Small name="align" caret w={16} /></SmallRow>
            <SmallRow><Small name="scaleS" /><Small name="offset" /><Small name="mirror" w={14} /><Small name="trim" caret w={16} /></SmallRow>
            <SmallRow><Small name="brush" /><Small name="box" /><Small name="array" w={14} /><Small name="fillet" caret w={16} /></SmallRow>
          </SmallGrid>
        </PanelBody>
        <PanelTitle>Edita <Caret /></PanelTitle>
      </Panel>
      <Panel $w={49}>
        <PanelBody>
          <SmallGrid>
            <SmallRow><Small name="cubeR" /><Small name="cubeL" /><Small name="cubeR" /><Small name="cubeL" /></SmallRow>
            <SmallRow><Small name="top" caret w={19} /><Small name="orbit" /></SmallRow>
            <SmallRow><Small name="wire" /><Small name="hidden" /><Small name="sphere" /><Small name="shaded" /></SmallRow>
          </SmallGrid>
        </PanelBody>
        <PanelTitle>Mc4-Viste</PanelTitle>
      </Panel>
    </Ribbon>
    <DocTabs>
      <DocTab $w={69} $inset={12}><span>Start</span></DocTab>
      <DocTab $w={64}><span>Disegno1_bis*</span><Cross color="#777" size={4} /></DocTab>
      <DocTab $w={64} $active><span>angoloin00*</span><Cross color="#555" size={4} /></DocTab>
      <NewTab aria-label="New tab"><Icon w={5} h={5} stroke="#ddd"><path d="M2.500 0v5M0 2.500h5" /></Icon></NewTab>
    </DocTabs>
  </>
);

const ViewportArea = () => (
  <Viewport>
    <Drawing />
    <ViewLabel>[−][Top][2D Wireframe]</ViewLabel>
    <ViewButtons>
      <QuickButton aria-label="Minimize view" $w={10}><Icon w={7} h={7} stroke="#777"><path d="M.5 3.500h6v2h-6z" strokeWidth=".8" /></Icon></QuickButton>
      <QuickButton aria-label="Restore view" $w={10}><Icon w={7} h={7} stroke="#666"><path d="M.5 1.500h5v5h-5zM2 .500h4.500V5M2 4h2" strokeWidth=".9" /></Icon></QuickButton>
      <QuickButton aria-label="Close view" $w={9}><Icon w={7} h={7} stroke="#666"><path d="M.5.500h6v6h-6zM2 2l3 3M5 2L2 5" strokeWidth=".8" /></Icon></QuickButton>
    </ViewButtons>
    <ViewCube><Compass /></ViewCube>
    <WcsHolder><WcsButton>WCS <Caret color="#c9c9e2" /></WcsButton></WcsHolder>
    <QuickProps>
      <Handle />
      <PropRows>
        <PropRow>
          <SelectBox $w={134}><Select aria-label="Object"><option>Line (40)</option></Select><Caret /></SelectBox>
          <PropIcons><Icon w={8} h={8} stroke="#ccc"><path d="M1.500.500h6v4h-6zM1.500 2.500h6M0 6.500h5" /><path d="M5 5l2 2" /></Icon></PropIcons>
        </PropRow>
        <PropRow>
          <PropName>Layer</PropName>
          <SelectBox $w={90}><Select><option>0</option></Select><Caret /></SelectBox>
        </PropRow>
      </PropRows>
      <Icon w={4} h={10} stroke="#ddd"><path d="M0 0l4 4M4 0L0 4M0 6.500h4M0 8.500h4" strokeWidth=".9" /></Icon>
    </QuickProps>
  </Viewport>
);

const CommandLine = () => (
  <CommandArea>
    <CommandGrip>
      <Cross color="#fff" />
      <Icon w={8} h={8} stroke="#ddd"><path d="M1 7l4-4" strokeWidth="1.500" /><path d="M4 1v3h3" strokeWidth="1.200" /></Icon>
    </CommandGrip>
    <CommandLines>
      <History>Command:</History>
      <Prompt>
        <Icon w={12} h={7} stroke="#777"><path d="M.5.500h7v6h-7zM.5 2h7M2 3.500l1 1-1 1" strokeWidth=".8" /><path d="M9 3h3l-1.500 2z" fill="#555" stroke="none" /></Icon>
        <CommandInput aria-label="Command" placeholder="Type a command" />
      </Prompt>
    </CommandLines>
  </CommandArea>
);

const BrowserArea = () => (
  <>
    <SideTabs>
      <SideTab $active>Comandi</SideTab>
      <SideTab>Dati estesi</SideTab>
      <SideTab>Selezione Rapida</SideTab>
    </SideTabs>
    <Browser>
      <BrowserTitle>MC4BROWSER</BrowserTitle>
      <Tree>
        <TreeHeader>Edificio Step by Step</TreeHeader>
        {tree.map(n => (
          <React.Fragment key={n.label}>
            <Row $selected={n.selected}>
              <Toggle aria-label={`Toggle ${n.label}`}>{n.items ? '-' : ''}</Toggle>
              <RowButton $selected={n.selected}><Icon w={11} h={11}>{treeIcons[n.icon]}</Icon>{n.label}</RowButton>
            </Row>
            {n.items && (
              <SubList>
                {n.items.map(([label, icon]) => (
                  <SubItem key={label}><SubButton><Icon w={6} h={6}>{tinyIcons[icon]}</Icon>{label}</SubButton></SubItem>
                ))}
              </SubList>
            )}
          </React.Fragment>
        ))}
      </Tree>
    </Browser>
  </>
);

const Status = () => (
  <StatusBar>
    <LayoutTabs>
      <LayoutTab $w={32} $active>Model</LayoutTab>
      <LayoutTab $w={35}>Layout1</LayoutTab>
      <LayoutTab $w={17}>+</LayoutTab>
    </LayoutTabs>
    <StatusTools>
      <Coordinates>2282.4687, 135.5162, 0.0000</Coordinates>
      <StatusButton $w={25} $line $text>MODEL</StatusButton>
      <StatusButton aria-label="Grid" $line><Icon w={8} h={8}><path d="M2.500 0v8M5.500 0v8M0 2.500h8M0 5.500h8" strokeWidth=".7" /></Icon></StatusButton>
      <StatusButton aria-label="Snap" $w={11}><Icon w={7} h={7} stroke="none"><path d="M0 0h1v1H0zM3 0h1v1H3zM6 0h1v1H6zM0 3h1v1H0zM3 3h1v1H3zM6 3h1v1H6zM0 6h1v1H0zM3 6h1v1H3zM6 6h1v1H6z" fill="#bbb" /></Icon></StatusButton>
      <StatusButton aria-label="Snap options" $w={9}><Caret /></StatusButton>
      <StatusButton aria-label="Ortho" $line><Icon w={8} h={8} stroke="#999"><path d="M.5 0v7.500H8M.5 4.500h3v3" /></Icon></StatusButton>
      <StatusButton aria-label="Polar" $w={11}><Icon w={9} h={8} stroke="#aaa"><circle cx="4" cy="4" r="3" /><path d="M4 4h5M4 4l3-3" /></Icon></StatusButton>
      <StatusButton aria-label="Polar options" $w={9}><Caret /></StatusButton>
      <StatusButton aria-label="Isometric" $w={10}><Icon w={8} h={8} stroke="#888"><path d="M4 0v8M1 2l6 5" /></Icon></StatusButton>
      <StatusButton aria-label="Isometric options" $w={8}><Caret /></StatusButton>
      <StatusButton aria-label="Object snap tracking" $w={12} $on><Icon w={8} h={8} stroke="#fff"><path d="M7 1L1 7h7" /></Icon></StatusButton>
      <StatusButton aria-label="Object snap" $w={12} $on $line><Icon w={9} h={8} stroke="#d6e6f8"><path d="M2.500 2.500h5v5h-5z" /><path d="M0 .500h3v2H0z" fill="#d6e6f8" stroke="none" /></Icon></StatusButton>
      <StatusButton aria-label="Object snap options" $w={7}><Caret /></StatusButton>
      <StatusButton aria-label="Lineweight" $line><Icon w={8} h={8}><path d="M0 1.500h4M0 3.500h4M0 5.500h4M0 7.500h8M5 1.500h3M5 4h3" /></Icon></StatusButton>
      <StatusButton aria-label="Cycling" $w={14} $line><Icon w={9} h={8}><path d="M.5.500h3v3h-3zM5.500 1.500h3v3h-3zM2.500 5h3v3h-3z" stroke="#aaa" strokeWidth=".8" /></Icon></StatusButton>
      <StatusButton aria-label="Units" $w={13}><Icon w={10} h={10} stroke="none"><path d="M0 0h7v9H0z" fill="#f1d774" /><path d="M2 1h5v5H2z" fill="#6ab4ee" /><path d="M4 7l2 2 4-4" stroke="#43b05c" strokeWidth="1.500" fill="none" /></Icon></StatusButton>
      <StatusButton aria-label="Isolate" $w={15}><Icon w={9} h={9} stroke="none"><path d="M0 1h8v5H0z" fill="#f2f2f2" /><path d="M5 9l2-4 2 4z" fill="#e0683a" /><path d="M2 3h3v1H2z" fill="#777" /></Icon></StatusButton>
      <StatusButton aria-label="Customization" $w={14}><Icon w={8} h={8} stroke="#e6e6e6"><path d="M0 1.500h8M0 4.500h8M0 7.500h8" /></Icon></StatusButton>
    </StatusTools>
  </StatusBar>
);

export default function App() {
  return (
    <>
      <Global />
      <Shell>
        <Title />
        <RibbonArea />
        <Main>
          <WorkColumn>
            <ViewportArea />
            <CommandLine />
          </WorkColumn>
          <BrowserArea />
        </Main>
        <Status />
        <LayerManager>
          <Cross color="#ccc" />
          <Icon w={5} h={6} stroke="#ccc"><path d="M.5 0v6M1 1l3 2-3 2" strokeWidth=".8" /></Icon>
          <Icon w={6} h={6} stroke="#ccc"><circle cx="3" cy="3" r="2" /><path d="M0 0l6 6M6 0L0 6" strokeWidth=".6" /></Icon>
          <LayerTitle>LAYER PROPERTIES MANAGER</LayerTitle>
          <Icon w={8} h={8} stroke="#aaa"><path d="M1 3l4-2 2 2-4 2zM1 5l2 2 4-2" strokeWidth=".8" /></Icon>
        </LayerManager>
      </Shell>
    </>
  );
}
